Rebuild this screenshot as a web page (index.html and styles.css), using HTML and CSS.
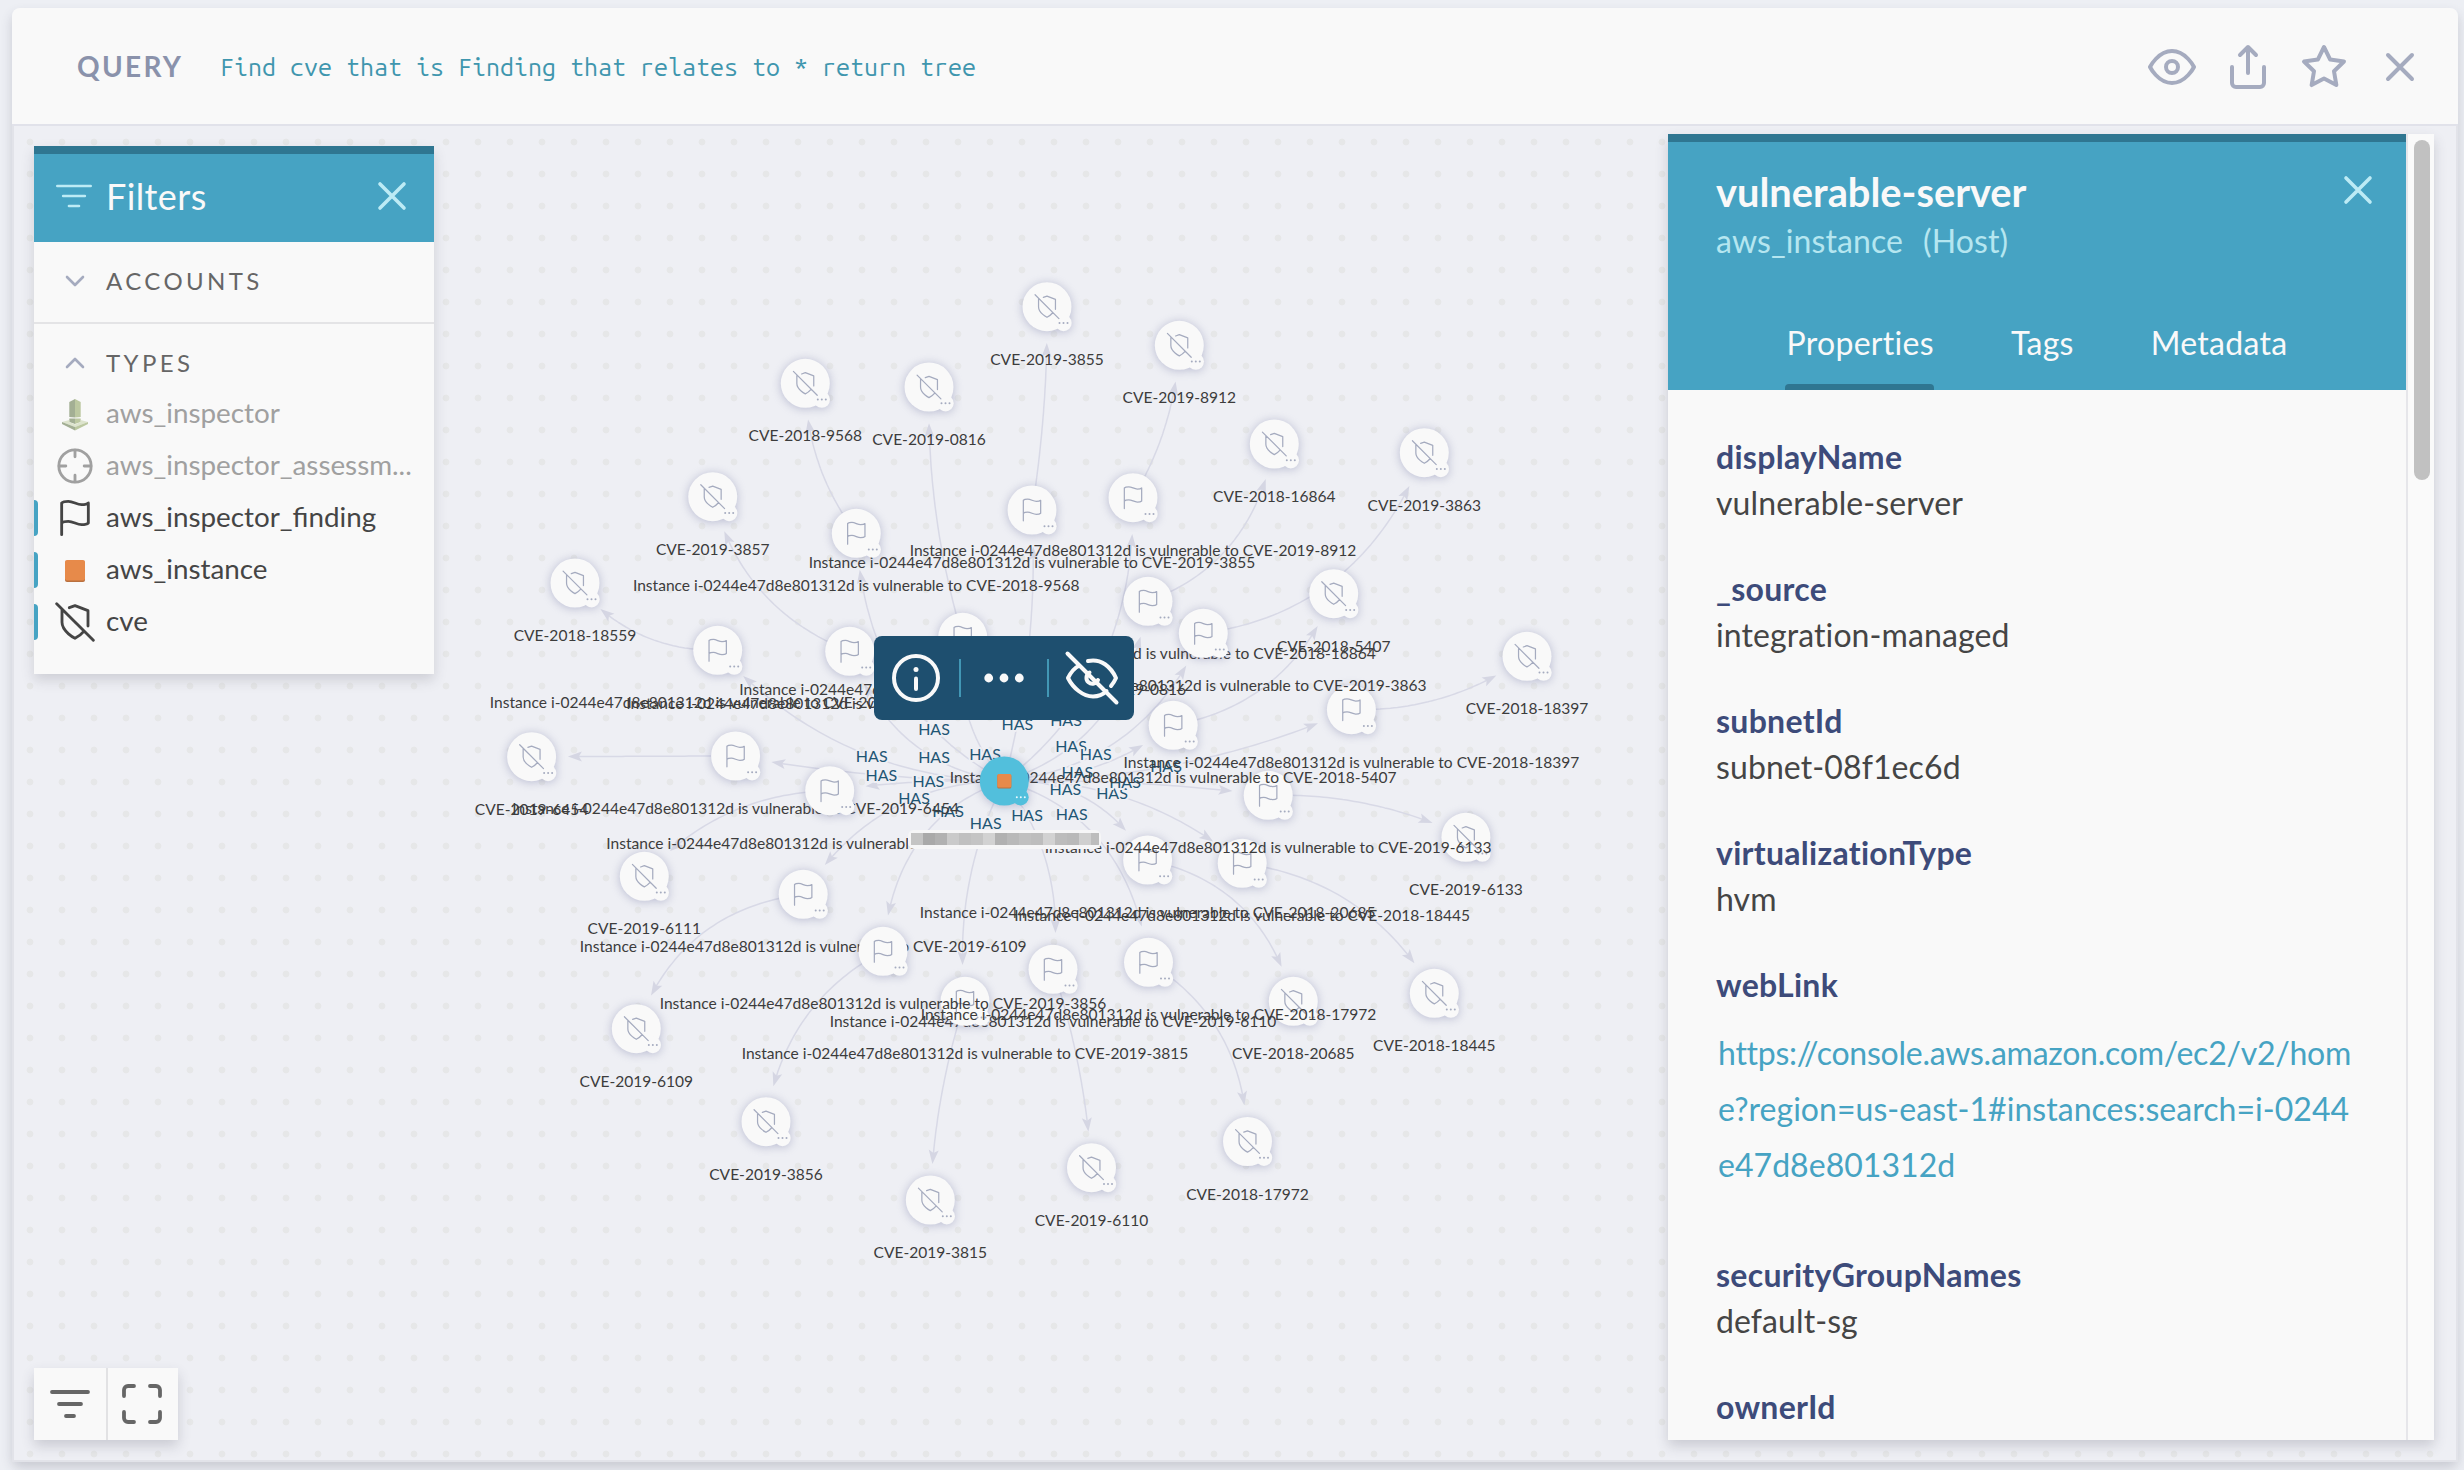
FILE: index.html
```html
<!DOCTYPE html>
<html lang="en">
<head>
<meta charset="utf-8">
<title>Query graph</title>
<link rel="stylesheet" href="styles.css">
</head>
<body>
<svg class="defs" width="0" height="0" aria-hidden="true">
  <symbol id="i-x" viewBox="0 0 24 24"><path d="M18 6L6 18M6 6l12 12"/></symbol>
  <symbol id="i-flag" viewBox="0 0 24 24"><path d="M4 15s1-1 4-1 5 2 8 2 4-1 4-1V3s-1 1-4 1-5-2-8-2-4 1-4 1zM4 22v-7"/></symbol>
  <symbol id="i-shield-off" viewBox="0 0 24 24"><path d="M19.8 14.4V5.2L12 2.2 8.6 3.4M4.2 4.8v7.4c0 5.6 7.8 9.6 7.8 9.6s3-1.500 5.300-4.200M1 1l22 22"/></symbol>
  <symbol id="i-filter" viewBox="0 0 24 24"><path d="M2 6h20M5.500 12h13M9 18h6"/></symbol>
</svg>
<main class="card">
  <header class="query-bar">
    <span class="query-label">QUERY</span>
    <span class="query-text">Find cve that is Finding that relates to * return tree</span>
    <div class="query-actions">
      <svg class="icon" viewBox="0 0 24 24"><path d="M1 12s4-8 11-8 11 8 11 8-4 8-11 8-11-8-11-8z"/><circle cx="12" cy="12" r="3"/></svg>
      <svg class="icon" viewBox="0 0 24 24"><path d="M4 12v8a2 2 0 0 0 2 2h12a2 2 0 0 0 2-2v-8M16 6l-4-4-4 4M12 2v13"/></svg>
      <svg class="icon" viewBox="0 0 24 24"><path d="M12 2l3.090 6.260L22 9.270l-5 4.870 1.180 6.880L12 17.770l-6.180 3.250L7 14.140 2 9.270l6.910-1.010L12 2z"/></svg>
      <svg class="icon"><use href="#i-x"/></svg>
    </div>
  </header>
  <section class="canvas">
    <svg class="graph" id="graph" viewBox="14 126 2442 1334"></svg>

    <div class="toolbar">
      <svg class="tool-info" viewBox="0 0 48 48"><circle cx="24" cy="24" r="22"/><path d="M24 24.500v10.500"/><circle class="dot" cx="24" cy="15.500" r="2.500"/></svg>
      <span class="tool-sep"></span>
      <svg class="tool-more" viewBox="0 0 40 10"><circle cx="4.700" cy="5" r="4.400"/><circle cx="20" cy="5" r="4.400"/><circle cx="35.300" cy="5" r="4.400"/></svg>
      <span class="tool-sep"></span>
      <svg class="tool-hide" viewBox="-26 -26 52 52"><path d="M-12.500-12.500C-18-10-22-4-24 0-19 10-9 18.500 1 18.500 7 18.500 11 16.500 14.500 13M-4-17C9-20 19-11 24 0 22.500 3.500 21 5.500 19 8M-2.500-5.500A6 6 0 1 0 6 2M-24.500-24.500l49 49"/></svg>
    </div>

    <aside class="filters">
      <div class="filters-head">
        <svg class="filters-icon"><use href="#i-filter"/></svg>
        <span class="filters-title">Filters</span>
        <svg class="close"><use href="#i-x"/></svg>
      </div>
      <div class="group accounts">
        <svg class="chevron" viewBox="0 0 20 12"><path d="M2 2l8 8 8-8"/></svg>
        <span>ACCOUNTS</span>
      </div>
      <div class="group types">
        <svg class="chevron" viewBox="0 0 20 12"><path d="M2 10l8-8 8 8"/></svg>
        <span>TYPES</span>
      </div>
      <ul class="type-list">
        <li class="type muted">
          <svg class="type-icon solid" viewBox="0 0 40 40"><path fill="#a3af94" d="M14.300 8l5.700-3v18.500l-5.700-.5z"/><path fill="#bcc8a1" d="M20 5l5.700 3v15l-5.700.5z"/><path fill="#a3af94" d="M14.300 24.500H20V30l-5.700-2z"/><path fill="#bcc8a1" d="M25.700 24.500H20V30l5.700-2z"/><path fill="#dde4cd" d="M7 28l7.300-2v2l5.700 2.500 5.700-2.500v-2l7.300 2-13 5z"/><path fill="#a3af94" d="M7 28l13 5v3.500L7 30z"/><path fill="#bcc8a1" d="M33 28l-13 5v3.500L33 30z"/></svg>
          <span>aws_inspector</span>
        </li>
        <li class="type muted">
          <svg class="type-icon" viewBox="0 0 24 24"><circle cx="12" cy="12" r="9.700"/><path d="M21.500 12h-4M6.500 12h-4M12 6.500v-4M12 21.500v-4"/></svg>
          <span>aws_inspector_assessm...</span>
        </li>
        <li class="type on">
          <svg class="type-icon"><use href="#i-flag"/></svg>
          <span>aws_inspector_finding</span>
        </li>
        <li class="type on">
          <svg class="type-icon solid" viewBox="0 0 40 40"><rect x="10" y="11" width="20" height="21" rx="2" fill="#b9703f"/><rect x="10" y="10" width="20" height="20.500" rx="2" fill="#e78a4a"/></svg>
          <span>aws_instance</span>
        </li>
        <li class="type on">
          <svg class="type-icon"><use href="#i-shield-off"/></svg>
          <span>cve</span>
        </li>
      </ul>
    </aside>

    <div class="view-buttons">
      <svg class="view-button" viewBox="-36 -36 72 72"><path d="M-18-12h36M-11 0h22M-4 12h8"/></svg>
      <svg class="view-button" viewBox="-34 -36 70 72"><path d="M-8-18h-6a4 4 0 0 0-4 4v6M18-8v-6a4 4 0 0 0-4-4H8M8 18h6a4 4 0 0 0 4-4V8M-18 8v6a4 4 0 0 0 4 4h6"/></svg>
    </div>

    <aside class="details">
      <div class="details-main">
        <div class="details-head">
          <svg class="close"><use href="#i-x"/></svg>
          <h1>vulnerable-server</h1>
          <p class="details-kind"><span>aws_instance</span><span>(Host)</span></p>
          <nav class="tabs">
            <span class="tab active">Properties</span>
            <span class="tab">Tags</span>
            <span class="tab">Metadata</span>
          </nav>
        </div>
        <dl class="properties">
          <dt>displayName</dt><dd>vulnerable-server</dd>
          <dt>_source</dt><dd>integration-managed</dd>
          <dt>subnetId</dt><dd>subnet-08f1ec6d</dd>
          <dt>virtualizationType</dt><dd>hvm</dd>
          <dt>webLink</dt><dd class="link"><a><span class="tight">https://console.aws.amazon.com/ec2/v2/hom</span><br>e?region=us-east-1#instances:search=i-0244<br>e47d8e801312d</a></dd>
          <dt>securityGroupNames</dt><dd>default-sg</dd>
          <dt>ownerId</dt>
        </dl>
      </div>
      <div class="scrollbar"><div class="thumb"></div></div>
    </aside>
  </section>
</main>
<script src="graph.js"></script>
</body>
</html>
```
FILE: styles.css
```css
* { box-sizing: border-box; }
body {
  margin: 0;
  width: 2464px;
  height: 1470px;
  padding: 8px 6px 8px 12px;
  overflow: hidden;
  background: #edeff4;
  font-family: Lato, sans-serif;
  color: #454545;
}
svg { display: block; flex: none; fill: none; stroke-linecap: round; stroke-linejoin: round; }
.defs { position: absolute; }
h1, p, ul, dl, dd { margin: 0; padding: 0; }

.card {
  height: 1454px;
  display: flex;
  flex-direction: column;
  border-radius: 8px;
  box-shadow: 0 6px 12px rgba(60, 62, 80, .2);
}
.query-bar {
  height: 118px;
  flex: none;
  display: flex;
  align-items: center;
  padding: 2px 34px 0 65px;
  background: #f9f9f9;
  border-bottom: 2px solid #e1e2ea;
  border-radius: 8px 8px 0 0;
}
.query-label { width: 143px; margin-top: -2px; font-size: 28px; font-weight: 700; letter-spacing: 2.300px; color: #8a92ab; line-height: 40px; }
.query-text { font-family: "Ubuntu Mono", "Noto Sans Mono CJK SC", "DejaVu Sans Mono", monospace; font-size: 25px; line-height: 40px; color: #3f96ae; white-space: pre; }
.query-actions { margin-left: auto; display: flex; gap: 28px; }
.icon { width: 48px; height: 48px; stroke: #a5abbf; stroke-width: 2; }

.canvas {
  position: relative;
  flex: 1;
  display: flex;
  justify-content: space-between;
  border: 2px solid #e2e3e9;
  border-top: 0;
  background: radial-gradient(circle at center, #e6e7e8 3px, rgba(230, 231, 232, 0) 3.800px) 0 0 / 32px 32px #eeeff4;
}
.graph { position: absolute; left: 0; top: 0; width: 2442px; height: 1334px; }
.graph text { font-size: 15.550px; text-anchor: middle; }
.edge { stroke: #d8d9e6; stroke-width: 1.500; }
.arrow { fill: #d5d6e3; }
.graph .has { font-size: 16px; fill: #1f5674; stroke: #eeeff4; stroke-width: 4; paint-order: stroke; }
.label { fill: #3c3c3c; }
.disc { fill: #f9f9f9; }
.disc-root { fill: #52bfdc; }
.glow { filter: drop-shadow(0 1px 5px rgba(110, 115, 160, .42)); }
.glyph { stroke: #a5abbf; stroke-width: 1.150; }
.more { fill: #a5abbf; }
.more-root { fill: #eafaff; }

.toolbar {
  position: absolute;
  left: 860px;
  top: 510px;
  width: 260px;
  height: 84px;
  padding-left: 18px;
  display: flex;
  align-items: center;
  border-radius: 8px;
  background: #1e4f6f;
}
.toolbar svg { stroke: #f9f9f9; stroke-width: 4; }
.toolbar .dot, .toolbar .tool-more { fill: #f9f9f9; stroke: none; }
.tool-info { width: 48px; height: 48px; margin-right: 19px; }
.tool-more { width: 40px; height: 10px; margin: 0 23px; }
.tool-hide { width: 52px; height: 52px; margin-left: 17px; overflow: visible; }
.tool-sep { width: 2px; height: 38px; background: #4297b5; }

.filters {
  position: relative;
  width: 400px;
  height: 528px;
  margin: 20px 0 0 20px;
  border-top: 8px solid #2f7691;
  background: #f9f9f9;
  box-shadow: 0 6px 12px rgba(60, 62, 80, .18);
}
.filters-head { height: 88px; display: flex; align-items: center; padding: 0 18px 4px 20px; background: #46a3c3; }
.filters-icon { width: 40px; height: 40px; stroke: #bdebf5; stroke-width: 1.600; }
.filters-title { margin-left: 12px; font-size: 36px; letter-spacing: .4px; color: #f9f9f9; line-height: 44px; }
.close { width: 48px; height: 48px; stroke: #bdebf5; stroke-width: 1.800; margin-left: auto; }
.group { display: flex; align-items: center; font-size: 24px; letter-spacing: 3.400px; color: #666; }
.group span { margin-top: -2px; }
.chevron { width: 20px; height: 12px; margin: 0 21px 0 31px; stroke: #a5abbf; stroke-width: 2.600; }
.accounts { height: 82px; padding-bottom: 2px; border-bottom: 2px solid #e4e4e6; }
.types { height: 64px; padding-top: 14px; }
.type-list { list-style: none; }
.type { position: relative; height: 52px; display: flex; align-items: center; padding-left: 21px; font-size: 27.800px; white-space: nowrap; color: #454545; }
.type span { margin-left: 11px; margin-top: -3px; }
.type-icon { width: 40px; height: 40px; stroke: currentColor; stroke-width: 1.700; }
.type .solid { stroke: none; }
.muted { color: #a0a0a0; }
.on::before { content: ""; position: absolute; left: 0; width: 4px; height: 36px; border-radius: 0 4px 4px 0; background: #46a3c3; }

.view-buttons {
  position: absolute;
  left: 20px;
  top: 1242px;
  display: flex;
  background: #f9f9f9;
  box-shadow: 0 6px 12px rgba(60, 62, 80, .2);
}
.view-button { width: 72px; height: 72px; stroke: #666; stroke-width: 3.800; }
.view-button + .view-button { border-left: 2px solid #e2e2e4; }

.details {
  position: relative;
  width: 766px;
  height: 1306px;
  margin: 8px 22px 0 0;
  display: flex;
  background: #f9f9f9;
  box-shadow: 0 6px 12px rgba(60, 62, 80, .2);
}
.details-main { width: 738px; overflow: hidden; }
.details-head { position: relative; height: 256px; padding: 26px 48px 0; border-top: 8px solid #2f7691; background: #46a3c3; }
.details-head .close { position: absolute; right: 24px; top: 24px; }
h1 { font-size: 39.800px; font-weight: 700; line-height: 48px; color: #f9f9f9; }
.details-kind { display: flex; gap: 20px; margin-top: 1px; font-size: 32px; letter-spacing: .1px; line-height: 48px; color: #b5e6f0; }
.tabs { display: flex; justify-content: center; gap: 77px; margin-top: 44px; font-size: 32px; letter-spacing: .3px; line-height: 68px; color: #f9f9f9; }
.tab { height: 81px; }
.tab.active { position: relative; }
.tab.active::after { content: ""; position: absolute; left: -1px; right: 0; bottom: 0; height: 6px; border-radius: 4px 4px 0 0; background: #2f7691; }
.properties { padding: 44px 48px 0; font-size: 32px; line-height: 46px; }
dt { font-weight: 700; letter-spacing: .28px; color: #3d4b7a; }
dd { margin-bottom: 40px; letter-spacing: .1px; }
.link { margin: 17px 0 59px 2px; letter-spacing: .04px; line-height: 56px; color: #46a3c3; white-space: nowrap; }
.tight { letter-spacing: -.25px; }
.scrollbar { width: 28px; border-left: 2px solid #e6e6ea; background: #fafafa; padding: 6px 0 0 6px; }
.thumb { width: 16px; height: 340px; border-radius: 8px; background: #c1c1c1; }
```
FILE: graph.js
```js
const root = { x: 1004.3, y: 781 };

// cve id, finding x/y, cve x/y, HAS label x/baseline, point the second edge bends through
const links = [
  ["2018-20685", 1147.6, 860, 1293.3, 1001.3, 1065.3, 794.7, 1230, 897],
  ["2018-18445", 1242.2, 863.3, 1434.3, 993.3, 1112, 799.3, 1342, 897],
  ["2019-6133", 1268.2, 795.3, 1465.9, 837.3, 1125, 788.3, 1368, 804],
  ["2018-18397", 1351.4, 709.7, 1527, 656.3, 1166, 772, 1442, 698],
  ["2018-16864", 1148, 601.3, 1274.3, 444, 1071, 752, 1213, 563],
  ["2019-3863", 1203.3, 633.3, 1424.3, 452.7, 1095.7, 759.7, 1308, 598],
  ["2018-5407", 1173.2, 725.3, 1333.7, 593.7, 1077.3, 777.7, 1260, 690],
  ["2019-8912", 1133, 497.7, 1179.3, 345.3, 1066, 725.7, 1167, 420],
  ["2019-3855", 1032, 510, 1047, 306.7, 1017.3, 729.7, 1042, 430],
  ["2018-9568", 856.3, 533.3, 805.3, 383.3, 934, 734.7, 823, 475],
  ["2019-0816", 962.7, 637.3, 929, 387, 985, 760.3, 938, 527],
  ["2019-3857", 849.7, 651.3, 712.7, 496.7, 934, 763.3, 763, 593],
  ["2018-18559", 717.7, 650.3, 575, 583, 871.7, 762, 646, 637],
  ["2019-6454", 735.6, 756, 531.6, 756.7, 881.3, 780.7, 640, 756.3],
  ["2019-6111", 829.7, 790.7, 644.3, 876.3, 928.3, 787, 729, 813],
  ["2019-6109", 803.2, 894.3, 636.3, 1028.7, 914, 803.7, 703, 933],
  ["2019-6110", 1053, 969.3, 1091.5, 1167.7, 1027, 820.7, 1081, 1080],
  ["2019-3815", 965, 1001.3, 930.3, 1200, 985.7, 828.7, 939, 1110],
  ["2019-3856", 883, 951.3, 766, 1121.7, 948, 816.7, 817, 1003],
  ["2018-17972", 1148.5, 962.3, 1247.5, 1141.5, 1071.7, 819.7, 1204, 1010]
];

// Quadratic curve from a to b that passes through m.
function curve(a, m, b) {
  const d1 = Math.hypot(m.x - a.x, m.y - a.y);
  const d2 = Math.hypot(b.x - m.x, b.y - m.y);
  const t = d1 / (d1 + d2), k = 2 * t * (1 - t);
  const cx = (m.x - (1 - t) ** 2 * a.x - t * t * b.x) / k;
  const cy = (m.y - (1 - t) ** 2 * a.y - t * t * b.y) / k;
  const at = u => ({
    x: (1 - u) ** 2 * a.x + 2 * u * (1 - u) * cx + u * u * b.x,
    y: (1 - u) ** 2 * a.y + 2 * u * (1 - u) * cy + u * u * b.y
  });
  let u = 1, len = 0;
  while (u > 0 && len < 36) { u -= 0.002; const p = at(u); len = Math.hypot(p.x - b.x, p.y - b.y); }
  const tip = at(u);
  let v = u, p = tip;
  while (v > 0 && Math.hypot(p.x - tip.x, p.y - tip.y) < 11) { v -= 0.002; p = at(v); }
  const angle = Math.atan2(tip.y - p.y, tip.x - p.x) * 180 / Math.PI;
  let path = `M${a.x} ${a.y}`;
  for (let i = 1; i <= 40; i++) { const q = at(v * i / 40); path += `L${q.x.toFixed(1)} ${q.y.toFixed(1)}`; }
  return `<path class="edge" d="${path}"/><path class="arrow" transform="translate(${tip.x} ${tip.y}) rotate(${angle})" d="M0 0L-14-5L-11 0L-14 5z"/>`;
}

const dots = cls => [-4, 0, 4].map(d => `<circle class="${cls}" cx="${16.5 + d}" cy="16.3" r="1"/>`).join("");

function node(x, y, icon, text) {
  return `<g transform="translate(${x} ${y})">
    <g class="glow"><circle class="disc" r="24.5"/><circle class="disc" cx="16.5" cy="16.3" r="8.2"/></g>
    <use class="glyph" href="#${icon}" x="-13" y="-13" width="26" height="26"/>${dots("more")}
    <text class="label" y="58">${text}</text></g>`;
}

let edges = "", has = "", nodes = "";
for (const [id, fx, fy, cx, cy, hx, hy, mx, my] of links) {
  const f = { x: fx, y: fy };
  edges += curve(root, { x: hx, y: hy - 5.5 }, f) + curve(f, { x: mx, y: my }, { x: cx, y: cy });
  has += `<text class="has" x="${hx}" y="${hy}">HAS</text>`;
  nodes += node(cx, cy, "i-shield-off", `CVE-${id}`);
}
const findingOrder = ["2018-20685", "2018-18445", "2018-18397", "2019-6133", "2019-0816", "2018-16864", "2019-3863", "2019-6109", "2019-6454", "2019-6110"];
const rank = l => { const i = findingOrder.indexOf(l[0]); return i < 0 ? 99 : i; };
for (const [id, fx, fy] of [...links].sort((a, b) => rank(a) - rank(b))) {
  nodes += node(fx, fy, "i-flag", `Instance i-0244e47d8e801312d is vulnerable to CVE-${id}`);
}

// Pixelated name under the selected node.
const greys = ["#c4c4c4", "#bdbdbd", "#cacaca", "#b9b9b9", "#a9a9a9", "#d2d2d2", "#b4b4b4", "#c0c0c0", "#cfcfcf", "#b1b1b1", "#bcbcbc"];
let mosaic = `<rect x="908" y="830" width="193" height="19" rx="6" fill="#f6f6f7"/><rect x="911" y="833" width="188" height="12" fill="#bfbfbf"/>`;
for (let i = 0; i < 16; i++) {
  mosaic += `<rect x="${911 + i * 12}" y="833" width="${i < 15 ? 12 : 8}" height="12" fill="${greys[(i * 4 + (i >> 1)) % 11]}"/>`;
}

const selected = `<g transform="translate(${root.x} ${root.y})">
  <g class="glow"><circle class="disc-root" r="24.5"/><circle class="disc-root" cx="16.2" cy="16.3" r="8.2"/></g>
  <rect x="-7" y="-6.500" width="14" height="14" rx="1.500" fill="#b9703f"/><rect x="-7" y="-7" width="14" height="13.500" rx="1.500" fill="#e78a4a"/>
  ${dots("more-root")}</g>`;

document.getElementById("graph").innerHTML = edges + has + nodes + mosaic + selected;
```
